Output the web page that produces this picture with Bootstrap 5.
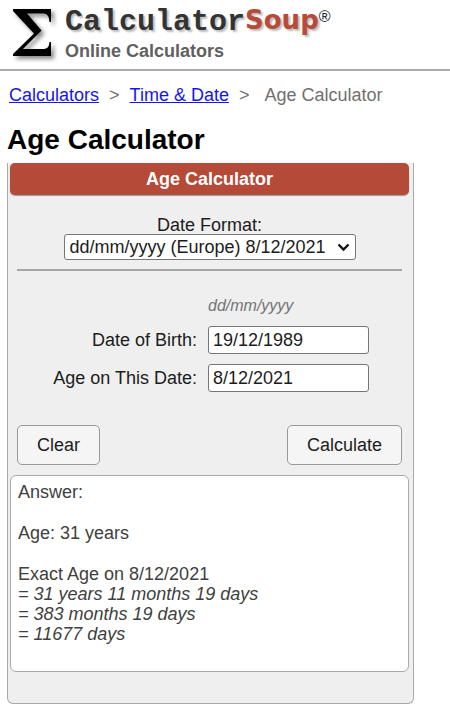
<!DOCTYPE html>
<html lang="en">
<head>
<meta charset="utf-8">
<meta name="viewport" content="width=device-width, initial-scale=1">
<title>Age Calculator</title>
<link href="https://cdn.jsdelivr.net/npm/bootstrap@5.3.0/dist/css/bootstrap.min.css" rel="stylesheet">
<style>
body { font: 18px/24px "Liberation Sans", Arial, sans-serif; color: #1c1c1c; background: #fff; }
.site-head { border-bottom: 2px solid #aaa; padding: 6px 12px 5px; gap: 9px; }
.sigma { width: 44px; height: 56px; flex: none; filter: drop-shadow(3px 3px 2px #888); }
.brand-name { font: bold 30px/32px "Liberation Mono", "Courier New", monospace; color: #333; text-shadow: 2px 2px 2px #bbb; }
.brand-soup { font: bold 26px/28px "DejaVu Sans", sans-serif; color: #b74a38; text-shadow: 2px 2px 2px #bbb; }
.brand-reg { font: 16px/16px "Liberation Sans", Arial, sans-serif; color: #222; padding-top: 3px; }
.tagline { font-weight: bold; color: #606060; line-height: 26px; }
.crumbs { padding: 12px 9px 0; gap: 10px; color: #707070; }
.crumbs a { color: #1414f5; }
.crumbs .last-crumb { padding-left: 5px; }
.page-title { font-size: 28px; line-height: 32px; font-weight: bold; color: #000; margin: 17px 7px 7px; }
.calc { background: #efefef; border: 1px solid #aaa; border-width: 0 1px 1px; border-radius: 0 0 6px 6px; margin: 0 36px 10px 7px; padding: 0 4px 31px 2px; }
.calc-title { background: #b54a38; color: #fff; font-size: 18px; line-height: 32px; font-weight: bold; border-radius: 5px; box-shadow: 0 1px 1px #999; margin: 0; }
.calc-body { padding: 17px 7px 10px; }
.format-select { font: inherit; height: 26px; padding: 0 24px 0 5px; width: 292px; max-width: 100%; border: 1px solid #767676; border-radius: 3px; color: #1c1c1c; background: #fff; appearance: none; }
.select-arrow { right: 6px; top: 9px; width: 13px; height: 9px; pointer-events: none; }
.rule { margin: 9px 0 25px; border-top: 2px solid #a5a5a5; opacity: 1; }
.fields { display: grid; grid-template-columns: 180px minmax(0, 161px); column-gap: 11px; row-gap: 10px; }
.fields label { text-align: right; line-height: 28px; }
.hint { grid-column: 2; font-size: 16px; line-height: 20px; font-style: italic; color: #757575; }
.date-box { font: inherit; height: 28px; width: 100%; padding: 0 4px; border: 1px solid #767676; border-radius: 3px; color: #1c1c1c; background: #fff; }
.actions { margin-top: 33px; }
.calc-btn { font-size: 18px; line-height: 24px; padding: 7px 19px; border: 1px solid #999; border-radius: 5px; color: #1c1c1c; background: #f5f5f5; }
.answer { background: #fff; border: 1px solid #aaa; border-radius: 6px; padding: 6px 7px 27px; line-height: 20px; color: #404040; }
.answer p { margin: 0 0 21px; }
.answer p:last-child { margin: 0; }
</style>
<script src="https://cdn.jsdelivr.net/npm/bootstrap@5.3.0/dist/js/bootstrap.bundle.min.js"></script>
</head>
<body>
<header class="site-head d-flex">
  <svg class="sigma" viewBox="0 0 44 56" aria-hidden="true"><path d="M1 3H39V16H37.500C37 9 35 7.500 30 7.500H15L29.500 24.500 11 43H31C35.500 43 37 41 37.500 36H39V50H1V48L22 27.500 1 5Z" fill="#000"/></svg>
  <div>
    <div class="d-flex"><span class="brand-name">Calculator</span><span class="brand-soup">Soup</span><span class="brand-reg">®</span></div>
    <div class="tagline">Online Calculators</div>
  </div>
</header>
<nav class="crumbs d-flex flex-wrap" aria-label="Breadcrumb">
  <a href="#calculators">Calculators</a><span>&gt;</span><a href="#time">Time &amp; Date</a><span>&gt;</span><span class="last-crumb">Age Calculator</span>
</nav>
<main>
  <h1 class="page-title">Age Calculator</h1>
  <form class="calc">
    <h2 class="calc-title text-center">Age Calculator</h2>
    <div class="calc-body">
      <div class="text-center">
        <label class="d-block lh-1 pt-1" for="format">Date Format:</label>
        <div class="position-relative d-inline-flex mw-100">
          <select class="format-select" id="format"><option>dd/mm/yyyy (Europe) 8/12/2021</option><option>mm/dd/yyyy (US) 12/8/2021</option></select>
          <svg class="select-arrow position-absolute" viewBox="0 0 13 9" aria-hidden="true"><path d="M1.5 1.5l5 5 5-5" fill="none" stroke="#111" stroke-width="2.4"/></svg>
        </div>
      </div>
      <hr class="rule">
      <div class="fields">
        <span class="hint">dd/mm/yyyy</span>
        <label for="birth">Date of Birth:</label><input class="date-box" id="birth" type="text" value="19/12/1989">
        <label for="ondate">Age on This Date:</label><input class="date-box" id="ondate" type="text" value="8/12/2021">
      </div>
      <div class="actions d-flex justify-content-between">
        <button type="reset" class="btn calc-btn">Clear</button>
        <button type="button" class="btn calc-btn">Calculate</button>
      </div>
    </div>
    <section class="answer" aria-label="Answer">
      <p>Answer:</p>
      <p>Age: 31 years</p>
      <p>Exact Age on 8/12/2021<br><i>= 31 years 11 months 19 days<br>= 383 months 19 days<br>= 11677 days</i></p>
    </section>
  </form>
</main>
</body>
</html>
